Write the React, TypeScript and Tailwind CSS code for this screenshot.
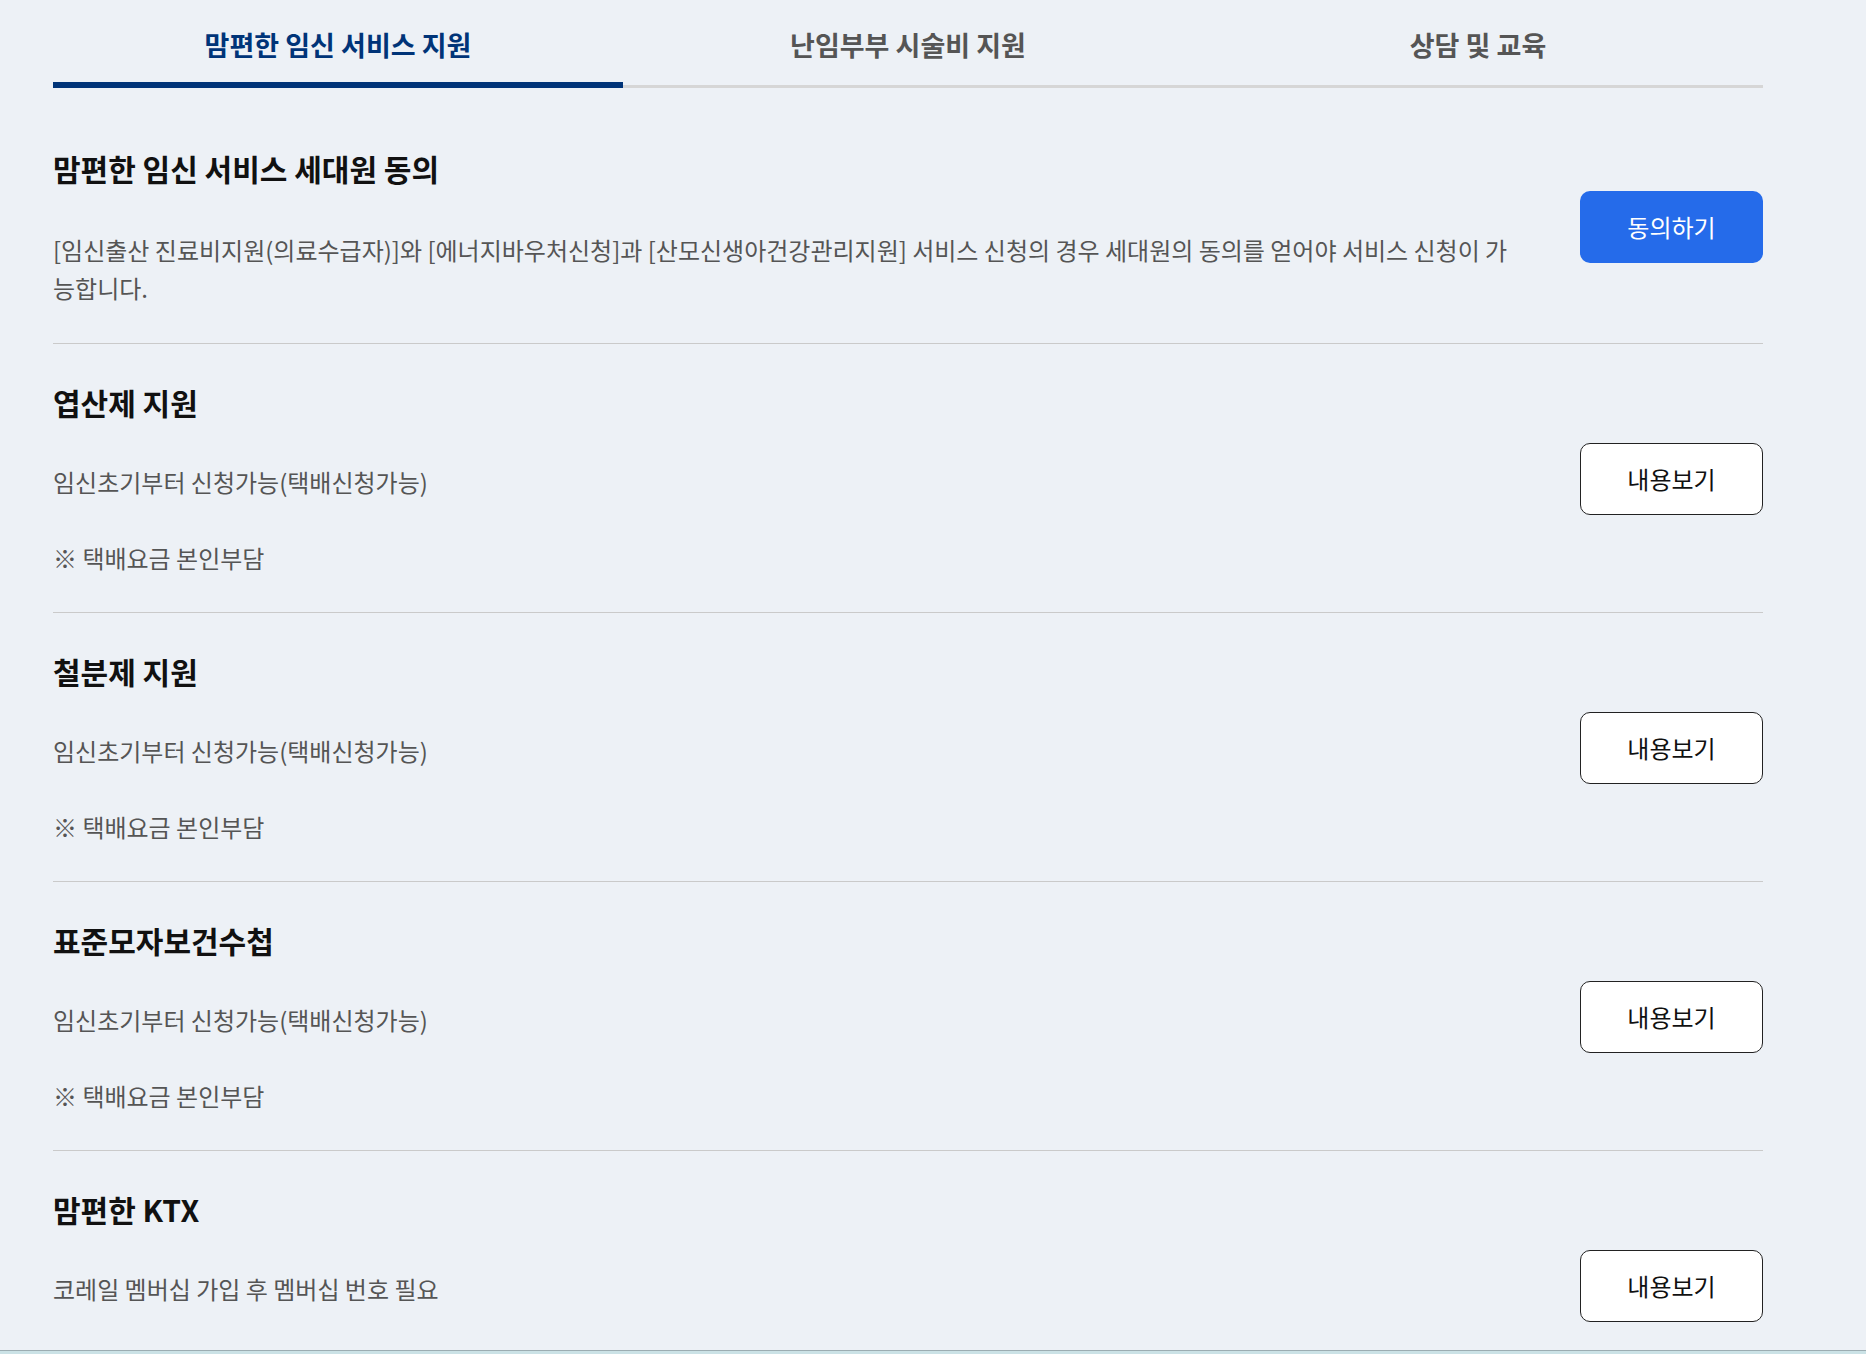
import { useState } from 'react';

interface ServiceItem {
  title: string;
  lines: string[];
  action: string;
}

const tabs = ['맘편한 임신 서비스 지원', '난임부부 시술비 지원', '상담 및 교육'];

const services: ServiceItem[] = [
  {
    title: '엽산제 지원',
    lines: ['임신초기부터 신청가능(택배신청가능)', '※ 택배요금 본인부담'],
    action: '내용보기',
  },
  {
    title: '철분제 지원',
    lines: ['임신초기부터 신청가능(택배신청가능)', '※ 택배요금 본인부담'],
    action: '내용보기',
  },
  {
    title: '표준모자보건수첩',
    lines: ['임신초기부터 신청가능(택배신청가능)', '※ 택배요금 본인부담'],
    action: '내용보기',
  },
];

const font = { fontFamily: '"Noto Sans CJK KR", "Noto Sans", sans-serif' };

function ActionButton({ label, primary }: { label: string; primary?: boolean }) {
  return (
    <button
      className={
        primary
          ? 'shrink-0 w-[183px] h-[72px] rounded-[10px] bg-[#256bea] text-white text-[24px]'
          : 'shrink-0 w-[183px] h-[72px] rounded-[10px] bg-white border border-[#222] text-[#111] text-[24px]'
      }
    >
      {label}
    </button>
  );
}

export default function App() {
  const [active, setActive] = useState(0);

  return (
    <div className="min-h-screen bg-[#edf1f6]" style={font}>
      <div className="ml-[53px] w-[1710px]">
        <div className="flex">
          {tabs.map((t, i) => (
            <div
              key={t}
              onClick={() => setActive(i)}
              className={
                i === active
                  ? 'flex-1 h-[88px] pt-[26px] leading-[38px] text-[27px] font-bold text-[#003478] border-b-[6px] border-[#003478] text-center cursor-pointer'
                  : 'flex-1 h-[88px] pt-[26px] leading-[38px] text-[27px] font-bold text-[#555] border-b-[3px] border-[#d6d6d6] text-center cursor-pointer'
              }
            >
              {t}
            </div>
          ))}
        </div>

        {/* 세대원 동의 */}
        <div className="mt-[24px] flex items-center justify-between pt-[35px] pb-[36px] border-b border-[#cacaca]">
          <div className="flex-1 pr-[20px]">
            <h2 className="text-[30px] leading-[42px] font-bold text-[#111]">맘편한 임신 서비스 세대원 동의</h2>
            <p className="mt-[42px] text-[24px] leading-[38px] text-[#555]">
              [임신출산 진료비지원(의료수급자)]와 [에너지바우처신청]과 [산모신생아건강관리지원] 서비스 신청의 경우 세대원의 동의를 얻어야 서비스 신청이 가
              <br />
              능합니다.
            </p>
          </div>
          <ActionButton label="동의하기" primary />
        </div>

        {services.map((s) => (
          <div
            key={s.title}
            className="flex items-center justify-between pt-[37px] pb-[35px] border-b border-[#cacaca]"
          >
            <div className="flex-1 pr-[20px]">
              <h2 className="text-[30px] leading-[42px] font-bold text-[#111]">{s.title}</h2>
              <p className="mt-[40px] text-[24px] leading-[38px] text-[#555]">{s.lines[0]}</p>
              <p className="mt-[38px] text-[24px] leading-[38px] text-[#555]">{s.lines[1]}</p>
            </div>
            <ActionButton label={s.action} />
          </div>
        ))}

        <div className="flex items-center justify-between min-h-[269px]">
          <div className="flex-1 self-start pt-[37px] pr-[20px]">
            <h2 className="text-[30px] leading-[42px] font-bold text-[#111]">맘편한 KTX</h2>
            <p className="mt-[40px] text-[24px] leading-[38px] text-[#555]">코레일 멤버십 가입 후 멤버십 번호 필요</p>
          </div>
          <ActionButton label="내용보기" />
        </div>
      </div>

      <div className="fixed inset-x-0 bottom-0 h-[4px] border-t border-[#9cadb2] bg-[#cbe2e6]" />
    </div>
  );
}
